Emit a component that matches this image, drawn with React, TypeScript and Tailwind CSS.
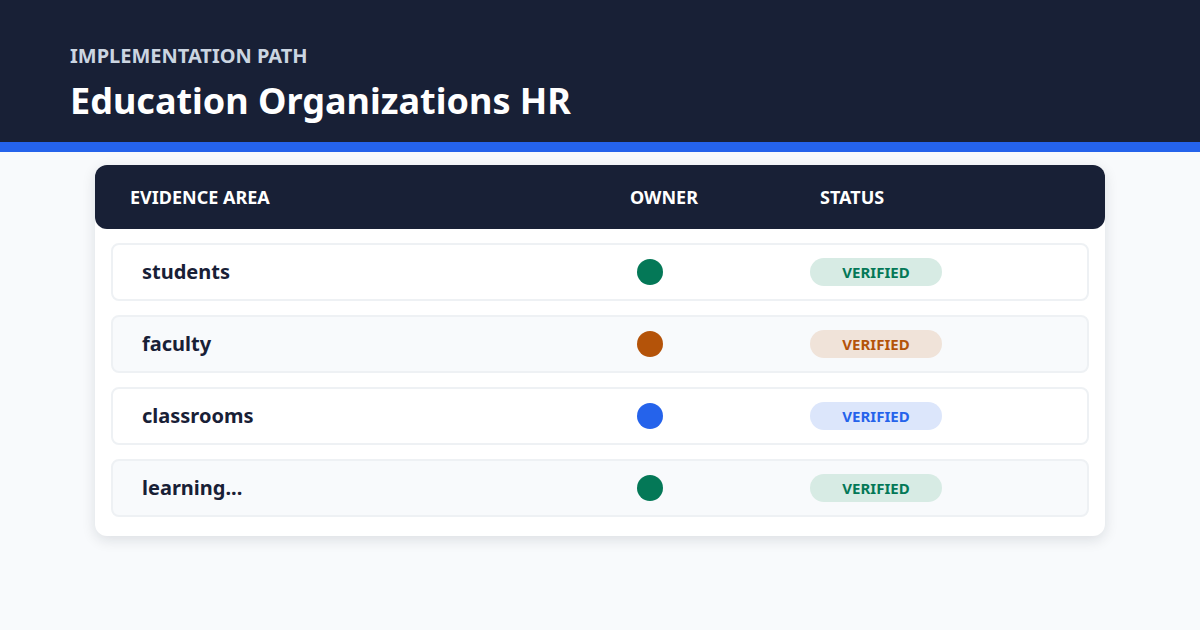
export default function App() {
  const rows = [
    { n: "students", dot: "bg-[#047857]", bb: "bg-[#d7ebe4]", bt: "text-[#047857]", alt: false },
    { n: "faculty", dot: "bg-[#b45309]", bb: "bg-[#f0e3d9]", bt: "text-[#b45309]", alt: true },
    { n: "classrooms", dot: "bg-[#2563eb]", bb: "bg-[#dce6fb]", bt: "text-[#2563eb]", alt: false },
    { n: "learning...", dot: "bg-[#047857]", bb: "bg-[#d7ebe4]", bt: "text-[#047857]", alt: true },
  ];
  return (
    <div className="w-[1200px] h-[630px] bg-[#f8fafc] overflow-hidden font-['Liberation_Sans',Arial,sans-serif]">
      <div className="h-[142px] bg-[#182036] pl-[70px] pt-[43px]">
        <div className="text-[20px] leading-[26px] font-bold text-[#cbd5e1]">IMPLEMENTATION PATH</div>
        <div className="text-[36px] leading-[44px] font-bold text-white mt-[10px]">Education Organizations HR</div>
      </div>
      <div className="h-[10px] bg-[#2563eb]" />
      <div className="mx-[95px] mt-[13px] bg-white rounded-[12px] shadow-[0_4px_14px_rgba(15,23,42,0.12)] pb-[19px]">
        <div className="h-[64px] bg-[#182036] rounded-[12px] flex items-center text-white text-[18px] font-bold">
          <div className="pl-[35px] w-[535px]">EVIDENCE AREA</div>
          <div className="w-[190px]">OWNER</div>
          <div>STATUS</div>
        </div>
        <div className="flex flex-col gap-[14px] px-[16px] mt-[14px]">
          {rows.map((r) => (
            <div key={r.n} className={`h-[58px] rounded-[8px] border-2 border-[#eef1f4] flex items-center ${r.alt ? "bg-[#f8fafc]" : "bg-white"}`}>
              <div className="pl-[29px] w-[524px] text-[20px] font-bold text-[#182036]">{r.n}</div>
              <div className="w-[173px]"><div className={`w-[26px] h-[26px] rounded-full ${r.dot}`} /></div>
              <div className={`w-[132px] h-[28px] rounded-full flex items-center justify-center text-[15px] font-bold ${r.bb} ${r.bt}`}>VERIFIED</div>
            </div>
          ))}
        </div>
      </div>
    </div>
  );
}
